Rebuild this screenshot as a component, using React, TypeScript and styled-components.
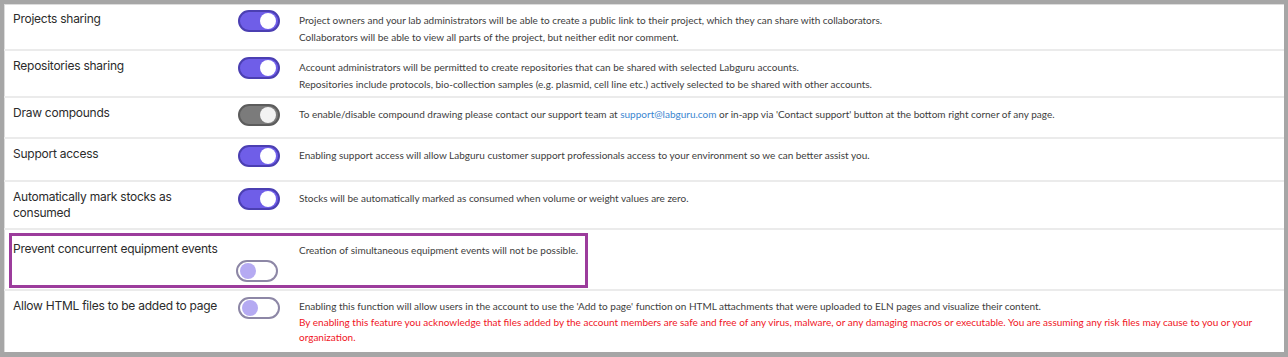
import React from "react";
import styled, { createGlobalStyle } from "styled-components";

const Global = createGlobalStyle`
  html, body { margin: 0; padding: 0; background: #a6a6a6; }
  body { font-family: "Inter", "Lato", sans-serif; }
`;

const Frame = styled.div`
  width: 1288px;
  height: 357px;
  box-sizing: border-box;
  padding: 4px 4px 5px 4px;
  background: #a6a6a6;
`;

const Panel = styled.div`
  height: 100%;
  background: #fff;
  box-shadow: inset 1px 1px 0 #dcdcdc;
  display: flex;
  flex-direction: column;
  overflow: hidden;
`;

const Row = styled.div<{ $h: number }>`
  display: grid;
  grid-template-columns: 225px 61px 1fr;
  height: ${(p) => p.$h}px;
  box-sizing: border-box;
  padding: 6px 0 0 9px;
  border-bottom: 2px solid #ebebeb;
  flex: none;
  &:last-child { border-bottom: none; }
`;

const HighlightRow = styled.div`
  height: 61px;
  box-sizing: border-box;
  padding: 3px 0 0 5px;
  border-bottom: 2px solid #ebebeb;
  flex: none;
`;

const HighlightBox = styled.div`
  width: 579px;
  height: 55px;
  box-sizing: border-box;
  border: 3px solid #9c3c9c;
  display: grid;
  grid-template-columns: 286px 1fr;
  padding: 4px 0 0 1px;
`;

const HLeft = styled.div`
  display: flex;
  flex-direction: column;
  align-items: flex-start;
  gap: 3px;
`;

const HToggle = styled.div`
  margin-left: 223px;
`;

const Title = styled.div`
  font-family: "Inter", sans-serif;
  font-size: 12px;
  line-height: 16px;
  color: #2b2b2b;
  padding-top: 1px;
  letter-spacing: -0.25px;
`;

const Desc = styled.div<{ $lh?: number }>`
  font-family: "Lato", "Inter", sans-serif;
  font-size: 10px;
  line-height: ${(p) => p.$lh ?? 17}px;
  color: #3d3d3d;
  padding-top: 2px;
`;

const Line = styled.div<{ $red?: boolean }>`
  white-space: nowrap;
  color: ${(p) => (p.$red ? "#f0141e" : "inherit")};
`;

const Link = styled.span`
  color: #3b86d0;
`;

type Variant = "on" | "disabled" | "off";

const Track = styled.div<{ $v: Variant }>`
  width: 42px;
  height: 22px;
  box-sizing: border-box;
  border-radius: 11px;
  display: flex;
  align-items: center;
  padding: 0 2px;
  justify-content: ${(p) => (p.$v === "off" ? "flex-start" : "flex-end")};
  background: ${(p) => (p.$v === "on" ? "#6f5ee8" : p.$v === "disabled" ? "#7b7b7b" : "#ffffff")};
  border: 2px solid ${(p) => (p.$v === "on" ? "#4b3fb2" : p.$v === "disabled" ? "#5c5c5c" : "#8d87a6")};
`;

const Knob = styled.div<{ $v: Variant }>`
  width: 16px;
  height: 16px;
  border-radius: 50%;
  background: ${(p) => (p.$v === "off" ? "#b5aaf2" : p.$v === "disabled" ? "#f2f2f2" : "#ffffff")};
`;

const ToggleCell = styled.div`
  padding-left: 4px;
  margin-left: -4px;
`;

const Toggle = ({ v }: { v: Variant }) => (
  <Track $v={v}>
    <Knob $v={v} />
  </Track>
);

export default function App() {
  return (
    <>
      <Global />
      <Frame>
        <Panel>
          <Row $h={47}>
            <Title>Projects sharing</Title>
            <ToggleCell><Toggle v="on" /></ToggleCell>
            <Desc>
              <Line>Project owners and your lab administrators will be able to create a public link to their project, which they can share with collaborators.</Line>
              <Line>Collaborators will be able to view all parts of the project, but neither edit nor comment.</Line>
            </Desc>
          </Row>
          <Row $h={47}>
            <Title>Repositories sharing</Title>
            <ToggleCell><Toggle v="on" /></ToggleCell>
            <Desc>
              <Line>Account administrators will be permitted to create repositories that can be shared with selected Labguru accounts.</Line>
              <Line>Repositories include protocols, bio-collection samples (e.g. plasmid, cell line etc.) actively selected to be shared with other accounts.</Line>
            </Desc>
          </Row>
          <Row $h={41}>
            <Title>Draw compounds</Title>
            <ToggleCell><Toggle v="disabled" /></ToggleCell>
            <Desc>
              <Line>
                To enable/disable compound drawing please contact our support team at <Link>support@labguru.com</Link> or in-app via 'Contact support' button at the bottom right corner of any page.
              </Line>
            </Desc>
          </Row>
          <Row $h={43}>
            <Title>Support access</Title>
            <ToggleCell><Toggle v="on" /></ToggleCell>
            <Desc>
              <Line>Enabling support access will allow Labguru customer support professionals access to your environment so we can better assist you.</Line>
            </Desc>
          </Row>
          <Row $h={48}>
            <Title>
              Automatically mark stocks as
              <br />
              consumed
            </Title>
            <ToggleCell><Toggle v="on" /></ToggleCell>
            <Desc>
              <Line>Stocks will be automatically marked as consumed when volume or weight values are zero.</Line>
            </Desc>
          </Row>
          <HighlightRow>
            <HighlightBox>
              <HLeft>
                <Title>Prevent concurrent equipment events</Title>
                <HToggle><Toggle v="off" /></HToggle>
              </HLeft>
              <Desc>
                <Line>Creation of simultaneous equipment events will not be possible.</Line>
              </Desc>
            </HighlightBox>
          </HighlightRow>
          <Row $h={62}>
            <Title>Allow HTML files to be added to page</Title>
            <ToggleCell><Toggle v="off" /></ToggleCell>
            <Desc $lh={15.5}>
              <Line>Enabling this function will allow users in the account to use the 'Add to page' function on HTML attachments that were uploaded to ELN pages and visualize their content.</Line>
              <Line $red>By enabling this feature you acknowledge that files added by the account members are safe and free of any virus, malware, or any damaging macros or executable. You are assuming any risk files may cause to you or your</Line>
              <Line $red>organization.</Line>
            </Desc>
          </Row>
        </Panel>
      </Frame>
    </>
  );
}
